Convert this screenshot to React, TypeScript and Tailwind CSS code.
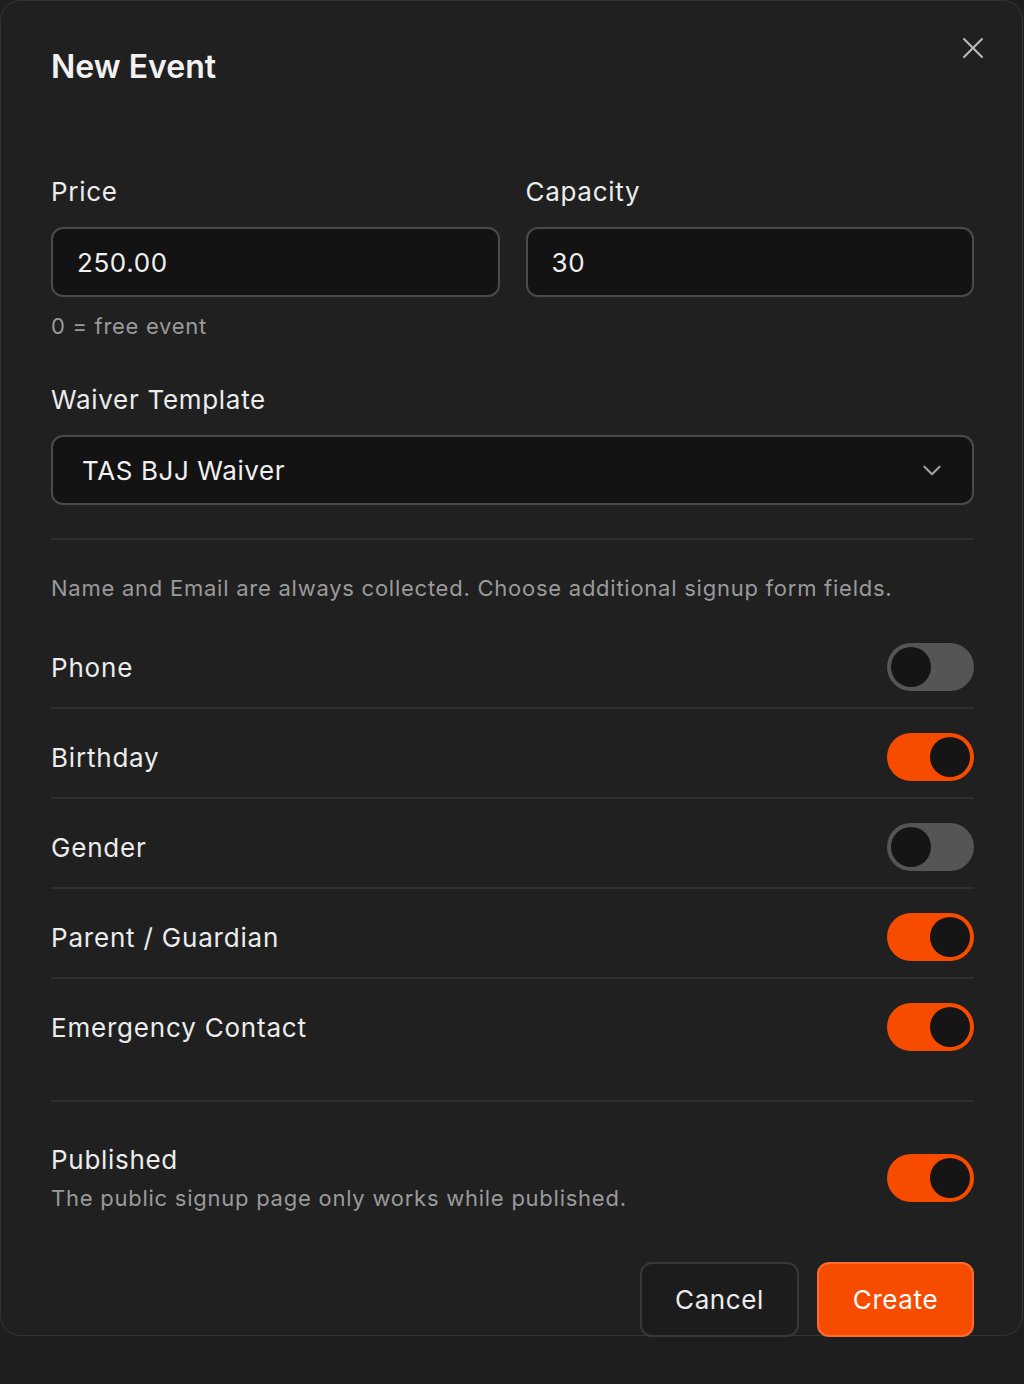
import React, { useState } from "react";

const font = { fontFamily: "Inter, 'Noto Sans', 'Liberation Sans', sans-serif" };

function Toggle({ on, onChange }: { on: boolean; onChange: () => void }) {
  return (
    <button
      onClick={onChange}
      className={`relative flex h-[48px] w-[87px] shrink-0 items-center rounded-full px-[4px] ${
        on ? "justify-end bg-[#f74b00]" : "justify-start bg-[#555555]"
      }`}
    >
      <span className="h-[40px] w-[40px] rounded-full bg-[#151515]" />
    </button>
  );
}

function Chevron() {
  return (
    <svg width="26" height="26" viewBox="0 0 24 24" fill="none" stroke="#a0a0a0" strokeWidth="2" strokeLinecap="round" strokeLinejoin="round">
      <path d="M5 9l7 7 7-7" />
    </svg>
  );
}

function CloseIcon() {
  return (
    <svg width="24" height="24" viewBox="0 0 24 24" fill="none" stroke="#bdbdbd" strokeWidth="2" strokeLinecap="round">
      <path d="M3 3l18 18M21 3L3 21" />
    </svg>
  );
}

export default function App() {
  const [fields, setFields] = useState([
    { name: "Phone", on: false },
    { name: "Birthday", on: true },
    { name: "Gender", on: false },
    { name: "Parent / Guardian", on: true },
    { name: "Emergency Contact", on: true },
  ]);
  const [published, setPublished] = useState(true);

  const flip = (i: number) =>
    setFields((f) => f.map((x, j) => (j === i ? { ...x, on: !x.on } : x)));

  return (
    <div className="min-h-[1384px] w-[1024px] bg-[#1e1e1e]" style={font}>
      <div className="relative h-[1336px] w-[1023px] rounded-[20px] border border-[#343434] bg-[#202020] pl-[50px] pr-[48px] pt-[46px]">
        <button className="absolute right-[37px] top-[35px]">
          <CloseIcon />
        </button>
        <h1 className="text-[32px] font-semibold leading-[40px] text-[#f2f2f2]">New Event</h1>

        <div className="mt-[89px] grid grid-cols-2 gap-[26px]">
          <div>
            <label className="block text-[26px] leading-[32px] tracking-[0.7px] text-[#ececec]">Price</label>
            <div className="mt-[19px] flex h-[70px] items-center rounded-[12px] border-2 border-[#4a4a4a] bg-[#131313] px-[24px] text-[26px] tracking-[0.6px] text-[#f0f0f0]">
              250.00
            </div>
            <p className="mt-[15px] text-[22px] leading-[28px] tracking-[0.7px] text-[#9a9a9a]">0 = free event</p>
          </div>
          <div>
            <label className="block text-[26px] leading-[32px] tracking-[0.7px] text-[#ececec]">Capacity</label>
            <div className="mt-[19px] flex h-[70px] items-center rounded-[12px] border-2 border-[#4a4a4a] bg-[#131313] px-[24px] text-[26px] tracking-[0.6px] text-[#f0f0f0]">
              30
            </div>
          </div>
        </div>

        <label className="mt-[44px] block text-[26px] leading-[32px] tracking-[0.7px] text-[#ececec]">Waiver Template</label>
        <div className="mt-[19px] flex h-[70px] items-center justify-between rounded-[12px] border-2 border-[#4a4a4a] bg-[#131313] pl-[29px] pr-[27px] text-[26px] tracking-[0.6px] text-[#f0f0f0]">
          <span>TAS BJJ Waiver</span>
          <Chevron />
        </div>

        <div className="mt-[33px] h-[2px] bg-[#2e2e2e]" />
        <p className="mt-[34px] text-[22px] leading-[28px] tracking-[0.75px] text-[#9a9a9a]">
          Name and Email are always collected. Choose additional signup form fields.
        </p>

        <div className="mt-[17px]">
          {fields.map((f, i) => (
            <div
              key={f.name}
              className={`flex items-center justify-between pt-[24px] ${
                i < fields.length - 1 ? "border-b-2 border-[#2e2e2e] pb-[16px]" : "pb-[17px]"
              }`}
            >
              <span className="text-[26px] tracking-[0.8px] text-[#ececec]">{f.name}</span>
              <Toggle on={f.on} onChange={() => flip(i)} />
            </div>
          ))}
        </div>

        <div className="mt-[32px] h-[2px] bg-[#2e2e2e]" />

        <div className="mt-[42px] flex items-center justify-between">
          <div>
            <div className="text-[26px] leading-[32px] tracking-[0.7px] text-[#ececec]">Published</div>
            <div className="mt-[8px] text-[22px] leading-[28px] tracking-[0.75px] text-[#9a9a9a]">
              The public signup page only works while published.
            </div>
          </div>
          <Toggle on={published} onChange={() => setPublished(!published)} />
        </div>

        <div className="mt-[50px] flex justify-end gap-[18px]">
          <button className="h-[75px] w-[159px] rounded-[12px] border-2 border-[#383838] bg-[#1c1c1c] text-[26px] tracking-[0.6px] text-[#ececec]">
            Cancel
          </button>
          <button className="h-[75px] w-[157px] rounded-[12px] border-2 border-[#ff6a2e] bg-[#f74b00] text-[26px] tracking-[0.6px] text-white">
            Create
          </button>
        </div>
      </div>
    </div>
  );
}
